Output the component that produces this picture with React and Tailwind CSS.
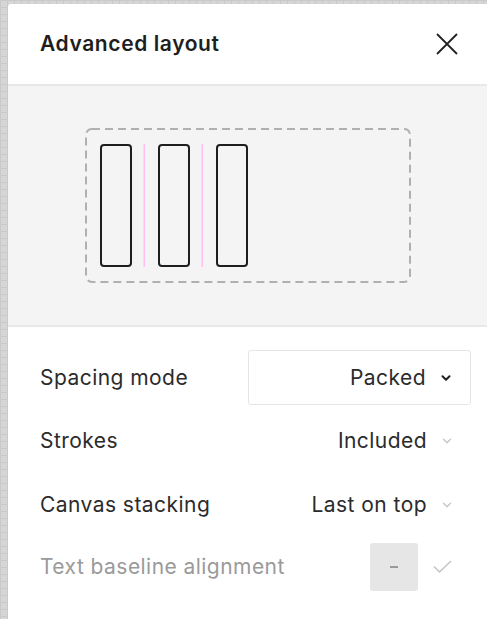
import React from "react";

function Chevron({ strong }) {
  return (
    <svg width="10" height="6" viewBox="0 0 10 6" className="block">
      <path
        d="M1.5 1.2 L5 4.7 L8.5 1.2"
        fill="none"
        stroke={strong ? "#222" : "#c4c4c4"}
        strokeWidth={strong ? 2 : 1.3}
        strokeLinecap="round"
        strokeLinejoin="round"
      />
    </svg>
  );
}

function Illustration() {
  return (
    <svg width="326" height="155" viewBox="0 0 326 155" className="block">
      <rect x="1" y="1" width="324" height="153" rx="6" fill="none" stroke="#b0b0b0" strokeWidth="2" strokeDasharray="8 5" />
      <rect x="16" y="17" width="30" height="121" rx="3" fill="none" stroke="#1e1e1e" strokeWidth="2" />
      <rect x="74" y="17" width="30" height="121" rx="3" fill="none" stroke="#1e1e1e" strokeWidth="2" />
      <rect x="132" y="17" width="30" height="121" rx="3" fill="none" stroke="#1e1e1e" strokeWidth="2" />
      <rect x="58.5" y="16" width="1.5" height="123" fill="#ffc0f0" />
      <rect x="116.5" y="16" width="1.5" height="123" fill="#ffc0f0" />
    </svg>
  );
}

export default function App() {
  return (
    <div
      className="w-[487px] h-[619px] overflow-hidden pl-[8px] pt-[4px] bg-[#d6d6d6] bg-[linear-gradient(#c9c9c9_1px,transparent_1px),linear-gradient(90deg,#c9c9c9_1px,transparent_1px)] bg-[size:7px_7px]"
      style={{ fontFamily: "Inter, 'Noto Sans', sans-serif" }}
    >
      <div className="w-[479px] h-[615px] bg-white rounded-tl-[3px] flex flex-col">
        {/* Header */}
        <div className="h-[80px] flex items-center justify-between pl-[32px] pr-[29px] shrink-0">
          <span className="text-[21px] font-semibold text-[#1e1e1e] tracking-[0.6px]">Advanced layout</span>
          <svg width="22" height="22" viewBox="0 0 22 22" className="block">
            <path d="M1 1 L21 21 M21 1 L1 21" stroke="#222" strokeWidth="1.8" fill="none" />
          </svg>
        </div>
        <div className="h-[2px] bg-[#e8e8e8] shrink-0" />
        {/* Preview */}
        <div className="h-[239px] bg-[#f4f4f4] pl-[77px] pt-[42px] shrink-0">
          <Illustration />
        </div>
        <div className="h-[2px] bg-[#e8e8e8] shrink-0" />
        {/* Rows */}
        <div className="flex flex-col pt-[19px] pl-[32px] text-[21px] tracking-[0.45px] text-[#2b2b2b]">
          <div className="h-[63px] flex items-center justify-between pr-[16px]">
            <span>Spacing mode</span>
            <div className="w-[223px] h-[55px] border border-[#e5e5e5] rounded-[3px] flex items-center justify-end pr-[19px]">
              <span>Packed</span>
              <span className="ml-[15px]"><Chevron strong /></span>
            </div>
          </div>
          <div className="h-[64px] flex items-center justify-between pr-[35px]">
            <span>Strokes</span>
            <div className="flex items-center">
              <span>Included</span>
              <span className="ml-[15px]"><Chevron /></span>
            </div>
          </div>
          <div className="h-[63px] flex items-center justify-between pr-[35px]">
            <span>Canvas stacking</span>
            <div className="flex items-center">
              <span>Last on top</span>
              <span className="ml-[15px]"><Chevron /></span>
            </div>
          </div>
          <div className="h-[62px] flex items-center justify-between pr-[35px] text-[#9a9a9a]">
            <span>Text baseline alignment</span>
            <div className="flex items-center">
              <div className="w-[48px] h-[48px] bg-[#e6e6e6] rounded-[3px] flex items-center justify-center">
                <div className="w-[8px] h-[2px] bg-[#9a9a9a]" />
              </div>
              <svg width="19" height="14" viewBox="0 0 19 14" className="block ml-[15px]">
                <path d="M1 6.5 L6.5 12 L18 1" fill="none" stroke="#c4c4c4" strokeWidth="1.5" />
              </svg>
            </div>
          </div>
        </div>
      </div>
    </div>
  );
}
